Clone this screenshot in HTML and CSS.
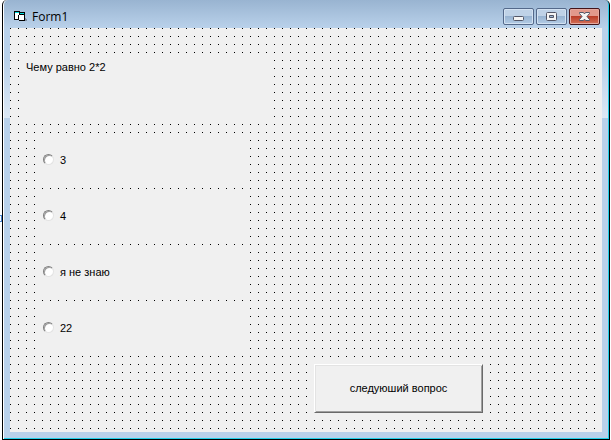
FILE: index.html
```html
<!DOCTYPE html>
<html lang="ru">
<head>
    <meta charset="UTF-8">
    <title>Form1</title>
    <link rel="stylesheet" href="styles.css">
</head>
<body>
<div class="behind"></div>
<div class="window">
    <div class="titlebar">
        <svg class="icon" width="14" height="12" viewBox="0 0 14 12" shape-rendering="crispEdges">
            <path d="M0 1h6v1h5v9h-6v-1h-5z" fill="#000"/>
            <path d="M1 3h4v6h-4zM5 5h5v5h-5z" fill="#fff"/>
            <path d="M1 2h4v1h-4zM6 3h4v1h-4z" fill="#00e0e0"/>
            <path d="M4 5h1v4h-1z" fill="#000"/>
            <path d="M11 8h1v1h1v2h-2z" fill="#7d8da0"/>
        </svg>
        <span class="title">Form1</span>
        <div class="caption">
            <button type="button" aria-label="Свернуть">
                <svg width="29" height="15" viewBox="0 0 29 15"><rect x="9.500" y="7.500" width="10" height="4" rx="1" fill="#f4f4f4" stroke="#535666"/></svg>
            </button>
            <button type="button" aria-label="Развернуть">
                <svg width="29" height="15" viewBox="0 0 29 15"><rect x="9.500" y="3.500" width="10" height="8" rx="1" fill="#f4f4f4" stroke="#535666"/><path d="M12.500 6.500h4v2h-4z" fill="#9db7d4" stroke="#535666"/></svg>
            </button>
            <button type="button" class="close" aria-label="Закрыть">
                <svg width="29" height="15" viewBox="0 0 29 15"><path d="M9.500 3.500h4l1 1.500 1-1.500h4v1l-2.500 3 2.500 3v1h-4l-1-1.500-1 1.500h-4v-1l2.500-3-2.500-3z" fill="#f4f4f4" stroke="#535666"/></svg>
            </button>
        </div>
    </div>
    <form class="form">
        <p class="question">Чему равно 2*2</p>
        <div class="options">
            <label><input type="radio" name="answer"> 3</label>
            <label><input type="radio" name="answer"> 4</label>
            <label><input type="radio" name="answer"> я не знаю</label>
            <label><input type="radio" name="answer"> 22</label>
        </div>
        <button type="button" class="next">следуюший вопрос</button>
    </form>
</div>
</body>
</html>
```
FILE: styles.css
```css
* {margin:0; padding:0; box-sizing:border-box;}

body {background:#fff; font:11px/14px "Liberation Sans", Arial, sans-serif; color:#000;}

.behind {position:absolute; left:-4px; top:215px; width:6px; height:7px; border:1px solid #4a86d0;}

.window {display:flex; flex-direction:column; min-height:100vh; margin:0 1px 0 2px; padding:0 7px 7px;
    border:1px solid #000; border-top:0; border-radius:5px 5px 0 0;
    box-shadow:inset 1px 0 #fff, inset -1px -1px #22cfe8;
    background:linear-gradient(#99b4d1 0, #b9d1ea 28px, #b9d1ea 60px, #dce8f5 118px, #b9d1ea 118px);}

.titlebar {display:flex; height:28px; padding:0 2px 0 4px;}
.icon {margin-top:10px;}
.title {margin:9px auto 0 4px; font:12px/16px "Open Sans", "Noto Sans", sans-serif;}

.caption {display:flex; gap:2px; padding-top:8px;}
.caption button {display:block; width:31px; height:17px; border:1px solid #54698a; border-radius:2px;
    box-shadow:inset 0 0 0 1px #d3e2f2;
    background:linear-gradient(#bfd2e7 50%, #98b4d2 50%, #b4cce5);}
.caption svg {display:block;}
.caption .close {border-color:#43141a; box-shadow:inset 0 0 0 1px #e5a99f;
    background:linear-gradient(#e2988b 50%, #bb3d28 50%, #d3725a);}

/* design grid: one black dot every 8px */
.form {flex:1; padding:32px 16px 19px;
    background:linear-gradient(90deg, transparent 1px, #f0f0f0 1px) 0 0/8px 8px,
    linear-gradient(#000 1px, #f0f0f0 1px) 0 0/8px 8px;}

.question {width:248px; height:64px; background:#f0f0f0;}

.options {display:flex; flex-direction:column; gap:15px; width:208px; margin:16px 0 15px 16px;}
.options label {display:flex; align-items:center; height:41px; padding-bottom:2px; background:#f0f0f0;}
.options input {appearance:none; width:11px; height:11px; margin:0 6px 0 1px; border:1px solid;
    border-color:#808080 #e3e3e3 #e3e3e3 #808080; border-radius:50%; background:#fff;
    box-shadow:inset 1px 1px #a0a0a0;}

.next {display:block; width:169px; height:49px; margin-left:288px; padding-bottom:2px; border:1px solid;
    border-color:#fff #696969 #696969 #fff; background:#f0f0f0; font:inherit; color:inherit;
    box-shadow:inset 1px 1px #e3e3e3, inset -1px -1px #a0a0a0;}
```
